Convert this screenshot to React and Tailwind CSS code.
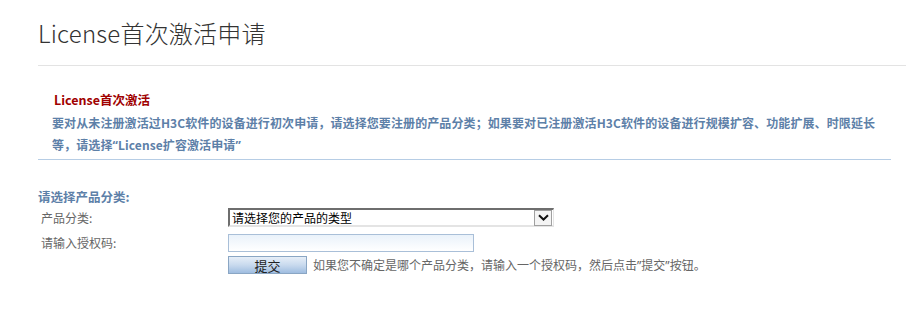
const FONT = { fontFamily: '"Noto Sans CJK SC", "Noto Sans", sans-serif' };

const Q = ({ children }) => (
  <span style={{ fontFamily: '"Noto Sans", sans-serif' }}>{children}</span>
);

const ChevronDown = () => (
  <svg width="11" height="7" viewBox="0 0 11 7" className="block">
    <path d="M1 1.2 L5.5 5.5 L10 1.2" fill="none" stroke="#111" strokeWidth="2" />
  </svg>
);

const FormRow = ({ label, children, className = "" }) => (
  <div className={`flex items-center ${className}`}>
    <div className="w-[190px] shrink-0 pl-[3px] text-[12px] text-[#666] leading-none">{label}</div>
    {children}
  </div>
);

const App = () => {
  return (
    <div className="w-[906px] h-[315px] bg-white overflow-hidden" style={FONT}>
      {/* Page title */}
      <div className="pl-[38px] pt-[17px]">
        <h1 className="text-[24px] font-light text-[#333] leading-[32px] tracking-[0.2px]">
          License首次激活申请
        </h1>
        <div className="mt-[16px] h-px bg-[#e3e3e3]"></div>
      </div>

      {/* Intro block */}
      <div className="pl-[38px] pr-[15px]">
        <div className="pl-[14px] pt-[25px]">
          <div className="pl-[2px] text-[12.5px] font-bold text-[#a00000] leading-[18px]">
            License首次激活
          </div>
          <p className="mt-[3px] w-[830px] text-[12px] tracking-[0.1px] font-bold text-[#5d80a8] leading-[22px]">
            要对从未注册激活过H3C软件的设备进行初次申请，请选择您要注册的产品分类；如果要对已注册激活H3C软件的设备进行规模扩容、功能扩展、时限延长等，请选择<Q>“</Q>License扩容激活申请<Q>”</Q>
          </p>
        </div>
        <div className="mt-[2px] h-px bg-[#b6cde5]"></div>
      </div>

      {/* Form */}
      <div className="pl-[38px] pt-[29px]">
        <div className="text-[12.5px] font-bold text-[#5d80a8] leading-[16px]">请选择产品分类:</div>

        <FormRow label="产品分类:" className="mt-[3px]">
          <div className="flex items-center w-[326px] h-[19px] bg-white border-t-2 border-l-2 border-t-[#6e6e6e] border-l-[#6e6e6e] border-r border-b-2 border-r-[#e4e4e4] border-b-[#e4e4e4]">
            <span className="flex-1 pl-[2px] text-[12px] text-black leading-none">请选择您的产品的类型</span>
            <span className="flex items-center justify-center w-[18px] h-[16px] mr-[1px] bg-[#f4f4f4] border border-[#a0a0a0]">
              <ChevronDown />
            </span>
          </div>
        </FormRow>

        <FormRow label="请输入授权码:" className="mt-[7px]">
          <div className="w-[246px] h-[18px] border border-[#a9bfd8] bg-gradient-to-b from-[#eaf2fa] to-white"></div>
        </FormRow>

        <FormRow label="" className="mt-[4px]">
          <button className="w-[79px] h-[18px] border border-[#8aa6c4] bg-gradient-to-b from-[#e6eef8] via-[#c9daee] to-[#9fbde0] text-[13px] text-[#222] leading-none">
            提交
          </button>
          <span className="ml-[6px] text-[12px] text-[#666] leading-none">
            如果您不确定是哪个产品分类，请输入一个授权码，然后点击<Q>”</Q>提交<Q>”</Q>按钮。
          </span>
        </FormRow>
      </div>
    </div>
  );
};

export default App;
